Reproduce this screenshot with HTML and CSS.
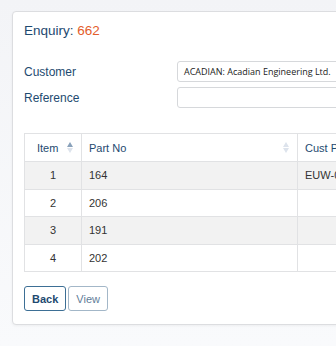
FILE: index.html
```html
<!DOCTYPE html>
<html lang="en">
<head>
    <meta charset="UTF-8">
    <meta name="viewport" content="width=device-width, initial-scale=1.0">
    <title>Enquiry 662</title>
    <link rel="stylesheet" href="styles.css">
</head>
<body>
    <div class="card">
        <h1 class="heading">Enquiry: <span class="enquiry-no">662</span></h1>

        <div class="form-row">
            <label class="form-label">Customer</label>
            <div class="form-input">ACADIAN: Acadian Engineering Ltd.</div>
        </div>
        <div class="form-row">
            <label class="form-label">Reference</label>
            <div class="form-input"></div>
        </div>

        <table class="lines">
            <thead>
                <tr>
                    <th class="col-item">Item <span class="sort sort-asc"></span></th>
                    <th class="col-part">Part No <span class="sort"></span></th>
                    <th class="col-cust">Cust Part No</th>
                </tr>
            </thead>
            <tbody>
                <tr class="odd"><td class="num">1</td><td>164</td><td>EUW-0041</td></tr>
                <tr><td class="num">2</td><td>206</td><td></td></tr>
                <tr class="odd"><td class="num">3</td><td>191</td><td></td></tr>
                <tr><td class="num">4</td><td>202</td><td></td></tr>
            </tbody>
        </table>

        <div class="actions">
            <button class="btn btn-primary">Back</button>
            <button class="btn btn-muted">View</button>
        </div>
    </div>
</body>
</html>
```

FILE: styles.css
```css
body {
    margin: 0;
    padding: 11px 0 0 12px;
    font-family: "Liberation Sans", Arial, sans-serif;
    background: linear-gradient(180deg, #f3f4f7, #f9fafc);
    height: 346px;
    box-sizing: border-box;
    overflow: hidden;
}

.card {
    width: 480px;
    height: 314px;
    box-sizing: border-box;
    background-color: #fff;
    border: 1px solid #dcdde0;
    border-radius: 4px;
    box-shadow: 0 1px 3px rgba(0, 0, 0, 0.05);
    padding: 11px 11px 0 11px;
}

.heading {
    margin: 0;
    font-size: 13.5px;
    font-weight: normal;
    line-height: 16px;
    color: #1e4a70;
}

.enquiry-no {
    color: #e35d2b;
}

.form-row {
    display: flex;
    align-items: center;
    height: 21px;
    margin-bottom: 5px;
}

.form-row:first-of-type {
    margin-top: 22px;
}

.form-label {
    width: 153px;
    font-size: 12px;
    color: #1e4a70;
}

.form-input {
    width: 220px;
    height: 21px;
    box-sizing: border-box;
    border: 1px solid #d6d8db;
    border-radius: 3px;
    padding: 0 6px;
    font-family: "Open Sans", sans-serif;
    font-size: 9px;
    line-height: 19px;
    color: #222;
    white-space: nowrap;
    overflow: hidden;
}

.lines {
    margin-top: 25px;
    border-collapse: collapse;
    table-layout: fixed;
    width: 420px;
    font-size: 11px;
    color: #333;
}

.lines th,
.lines td {
    border: 1px solid #e1e2e4;
    height: 27.5px;
    padding: 0 7px;
    text-align: left;
    box-sizing: border-box;
    white-space: nowrap;
}

.lines th {
    height: 28px;
    font-weight: normal;
    color: #1e4a70;
    position: relative;
}

.col-item {
    width: 57px;
    padding-left: 12px !important;
}

.col-part {
    width: 216px;
}

.col-cust {
    width: 147px;
}

.lines td.num {
    text-align: center;
}

.lines tr.odd td {
    background-color: #f2f2f2;
}

.sort {
    position: absolute;
    right: 8px;
    top: 8px;
    width: 6px;
    height: 11px;
}

.sort::before,
.sort::after {
    content: "";
    position: absolute;
    left: 0;
    border-left: 3px solid transparent;
    border-right: 3px solid transparent;
}

.sort::before {
    top: 0;
    border-bottom: 5px solid #dde3ec;
}

.sort::after {
    top: 6px;
    border-top: 5px solid #dde3ec;
}

.sort-asc::before {
    border-bottom-color: #8aa2bb;
}

.actions {
    display: flex;
    gap: 2px;
    margin-top: 14px;
}

.btn {
    height: 25px;
    padding: 0 7px;
    border-radius: 3px;
    background: #fff;
    font-family: "Liberation Sans", Arial, sans-serif;
    font-size: 11px;
    cursor: pointer;
}

.btn-primary {
    border: 1px solid #3d6f95;
    color: #1e4a70;
    font-weight: bold;
}

.btn-muted {
    border: 1px solid #a3b7c8;
    color: #5f7d98;
}
```
